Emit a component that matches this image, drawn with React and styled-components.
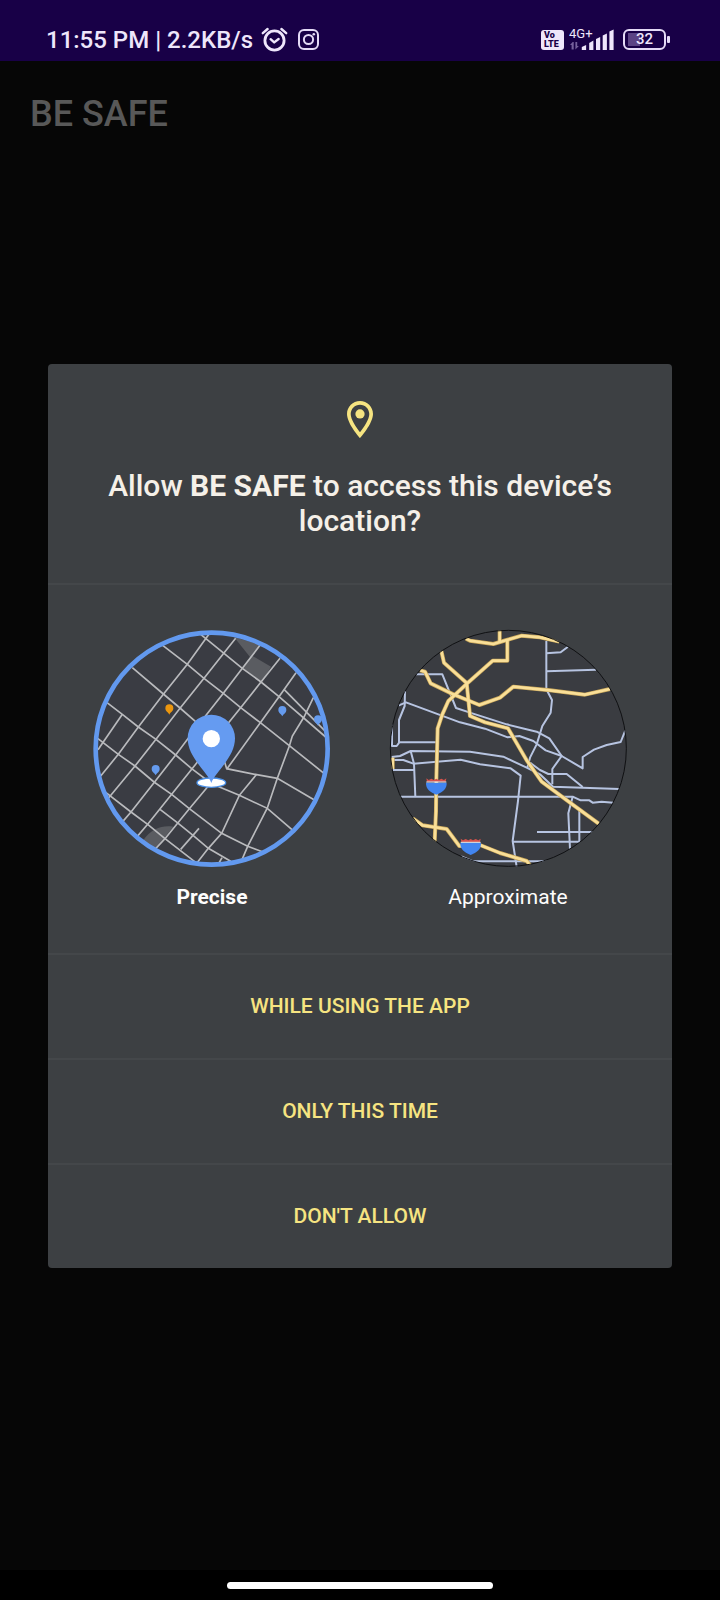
import React from "react";
import styled, { createGlobalStyle } from "styled-components";

const GlobalStyle = createGlobalStyle`
  *, *::before, *::after { box-sizing: border-box; }
  body {
    margin: 0;
    background: #060606;
    font-family: Roboto, "Liberation Sans", sans-serif;
  }
`;

const Screen = styled.div`
  min-height: 100vh;
  display: flex;
  flex-direction: column;
  background: #060606;
`;

const StatusBar = styled.header`
  height: 61px;
  padding: 18px 50px 0 46px;
  display: flex;
  align-items: center;
  justify-content: space-between;
  background: #180047;
  color: #eee6fb;
`;

const StatusGroup = styled.div`
  display: flex;
  align-items: center;
  gap: ${(p) => p.$gap}px;
`;

const Clock = styled.span`
  font-size: 24px;
  line-height: 28px;
  font-weight: 500;
  white-space: nowrap;
`;

const VolteBadge = styled.span`
  width: 23px;
  height: 20px;
  padding: 1px 3px;
  border-radius: 3px;
  background: #eee6fb;
  color: #180047;
  font-size: 9px;
  line-height: 9px;
  font-weight: 900;
`;

const Battery = styled.span`
  position: relative;
  width: 43px;
  height: 21px;
  margin-right: 4px;
  border: 2px solid #e4daf6;
  border-radius: 6px;
  display: grid;
  place-items: center;
  font-size: 15px;
  line-height: 17px;
  font-weight: 500;
  background: linear-gradient(#5b4384, #5b4384) 3px 2px / 12px 13px no-repeat;

  &::after {
    content: "";
    position: absolute;
    right: -6px;
    top: 5px;
    width: 3px;
    height: 7px;
    border-radius: 1px;
    background: #e4daf6;
  }
`;

const Stage = styled.main`
  flex: 1;
  display: grid;
  grid-template: 1fr / 1fr;
`;

const AppTitle = styled.h1`
  grid-area: 1 / 1;
  align-self: start;
  margin: 0;
  padding: 31px 30px;
  color: #585858;
  font-size: 36px;
  line-height: 44px;
  font-weight: 500;
`;

const Dialog = styled.section`
  grid-area: 1 / 1;
  align-self: center;
  margin: 0 48px;
  border-radius: 4px;
  overflow: hidden;
  background: #3d4043;
`;

const DialogHeader = styled.div`
  display: flex;
  flex-direction: column;
  align-items: center;
  gap: 30px;
  padding: 37px 48px 45px;
`;

const Question = styled.h2`
  margin: 0;
  color: #f5f0e8;
  font-size: 30px;
  line-height: 35px;
  font-weight: 500;
  text-align: center;

  strong { font-weight: 700; }
`;

const Accuracy = styled.div`
  display: flex;
  padding: 44px 16px 43px;
  border-top: 2px solid #44474a;
`;

const Choice = styled.label`
  flex: 1;
  display: flex;
  flex-direction: column;
  align-items: center;
  gap: 15px;
  cursor: pointer;
  color: #fdfdfd;
  font-size: 21px;
  line-height: 26px;
  font-weight: ${(p) => (p.$selected ? 700 : 400)};
`;

const HiddenRadio = styled.input`
  position: absolute;
  opacity: 0;
  pointer-events: none;
`;

const Action = styled.button`
  display: block;
  width: 100%;
  height: 105px;
  padding: 0;
  border: 0;
  border-top: 2px solid #44474a;
  background: transparent;
  color: #f6e481;
  font-family: inherit;
  font-size: 21px;
  line-height: 26px;
  font-weight: 500;
  cursor: pointer;
`;

const NavBar = styled.footer`
  height: 30px;
  display: flex;
  justify-content: center;
  align-items: center;
  background: #000;
`;

const HomeHandle = styled.span`
  width: 37%;
  height: 7px;
  border-radius: 4px;
  background: #fff;
`;

const AlarmIcon = () => (
  <svg width="27" height="25" viewBox="0 0 27 25" fill="none" stroke="#eee6fb" strokeLinecap="round" aria-hidden="true">
    <circle cx="13.5" cy="13.5" r="9.6" strokeWidth="2.8" />
    <path d="M1.8 6.2 6.6 2M25.2 6.2 20.4 2" strokeWidth="2.4" />
    <path d="M9.6 12.2 13.2 15.4 17.6 12" strokeWidth="2.4" strokeLinejoin="round" />
  </svg>
);

const InstagramIcon = () => (
  <svg width="21" height="21" viewBox="0 0 21 21" fill="none" stroke="#e4daf6" strokeWidth="2" aria-hidden="true">
    <rect x="1" y="1" width="19" height="19" rx="5" />
    <circle cx="10.5" cy="10.5" r="4.6" />
    <circle cx="15.8" cy="5.2" r="1.3" fill="#e4daf6" stroke="none" />
  </svg>
);

const SignalIcon = () => (
  <svg width="49" height="25" viewBox="0 0 49 25" fill="#eee6fb" aria-label="4G+ signal">
    <text x="0" y="11" fontSize="13" fontFamily="Roboto, sans-serif">4G+</text>
    <g fill="#75609c">
      <path d="M2.6 22.5V18H1l2.7-3h1v7.5z" />
      <path d="M6.400 15v7.500l3.500-3.500H8.200V15z" />
    </g>
    <path d="M12.800 23v-3l4.300-2v5z" />
    <path d="M20.200 23v-7l4.200-2.500V23z" />
    <path d="M27 23V12l4.200-2v13z" />
    <path d="M33.700 23V8.500L37.900 6.500V23z" />
    <path d="M40.400 23V4.500L44.600 2.500V23z" />
  </svg>
);

const PlaceIcon = () => (
  <svg width="26" height="37" viewBox="5 2 14 20" preserveAspectRatio="none" fill="#f6e481" aria-hidden="true">
    <path d="M12 2C8.130 2 5 5.130 5 9c0 5.250 7 13 7 13s7-7.750 7-13c0-3.870-3.130-7-7-7zM7 9c0-2.760 2.240-5 5-5s5 2.240 5 5c0 2.880-2.880 7.190-5 9.880C9.920 16.210 7 11.850 7 9z" />
    <circle cx="12" cy="9" r="2.500" />
  </svg>
);

const STREETS = [
  "M390 65 322 160 250 250 175 348 115 430 62 495",
  "M467 82 430 128 372 202 300 292 228 385 165 465 85 562",
  "M540 103 487 172 430 247 345 355 287 432 222 515 153 603 128 632",
  "M600 142 543 213 482 290 430 355 335 475 275 550 203 640 172 676",
  "M648 185 597 257 541 335 440 475",
  "M385 525 328 593 255 683 226 714",
  "M530 490 478 553 425 667 385 712 350 757",
  "M700 260 672 318 637 375 628 405 592 502 562 591 503 706 486 746",
  "M127 310 54 416",
  "M357 652 302 715",
  "M426 740 417 756",
  "M362 70 432 127 487 172 543 213 597 257 737 378",
  "M248 103 322 160 372 202 430 247 482 290 541 335 628 404 732 487",
  "M157 170 250 249 300 291 345 330 430 440 440 473 530 491 592 502 702 566",
  "M80 274 127 310 175 348 228 385 287 432 335 473 395 518 478 553 562 592 636 656",
  "M50 380 115 430 165 465 222 513 275 550 328 593 425 667 503 706 547 722",
  "M78 545 153 603 203 640 255 683 347 754",
  "M240 595 292 635 340 674 385 712 452 751",
  "M612 235 737 362",
];

const SmallPin = ({ x, y, color }) => (
  <path
    transform={`translate(${x} ${y})`}
    fill={color}
    d="M0 16C-3 9-12 6-12-3a12 12 0 0 1 24 0C12 6 3 9 0 16z"
  />
);

const PreciseMap = () => (
  <svg width="240" height="240" viewBox="36 54 720 720" aria-hidden="true">
    <clipPath id="precise-area"><circle cx="395" cy="413" r="350" /></clipPath>
    <g clipPath="url(#precise-area)">
      <rect x="36" y="54" width="720" height="720" fill="#3a3c43" />
      <path fill="#5a5c61" d="M462 78 542 102 516 134 573 167 546 212 488 171 510 138zM188 690C215 650 250 642 280 647L226 714z" />
      <g fill="none" stroke="#b9babd" strokeWidth="5">
        {STREETS.map((d) => <path key={d} d={d} />)}
      </g>
      <SmallPin x={268} y={295} color="#eb960e" />
      <SmallPin x={227} y={477} color="#659bee" />
      <SmallPin x={607} y={300} color="#659bee" />
      <SmallPin x={714} y={328} color="#659bee" />
    </g>
    <circle cx="395" cy="413" r="348" fill="none" stroke="#6299ef" strokeWidth="14" />
    <ellipse cx="394" cy="515" rx="43" ry="14" fill="#fff" stroke="#4a90e8" strokeWidth="4" />
    <path fill="#659bf1" d="M394 516C384 485 323 440 323 382a71 71 0 0 1 142 0C465 440 404 485 394 516z" />
    <circle cx="394" cy="383" r="26" fill="#fff" />
  </svg>
);

const ROADS = [
  "M138 190H217L258 291 300 305 410 340 500 362 538 382 575 435 547 474V520",
  "M85 284 108 274 270 334 345 353 413 379 448 375 490 390 527 418 575 435 638 472V438L672 416 710 402 752 393 766 358",
  "M105 240 104 285 87 327V394M66 340V405H80L88 394H202",
  "M65 438 90 435 122 420 300 422 400 437 470 470 510 490 549 527 748 534",
  "M65 447H100L130 458 272 446 330 460 422 472 452 494 444 570 428 690 440 768",
  "M66 477H131M122 420 132 458 136 557",
  "M90 557H608L632 568H658L668 575 695 572 730 575",
  "M529 90V235L546 267 542 305 517 345 500 400 480 440 472 470",
  "M529 127 572 124 594 107M529 181 678 176",
  "M480 455 510 477 535 489H590L638 528",
  "M608 557 595 607 600 714M628 596V692H428",
  "M501 663H668M274 736 310 751H530",
];

const HIGHWAYS = [
  "M288 83 300 89 370 99 410 87 455 74 510 79 568 92",
  "M389 56V93M412 86V149H368L292 217 235 270 217 310 203 352 199 505 198 600 194 692",
  "M214 120 222 155 290 216 300 315 345 334 414 352 470 448 515 512 600 575 686 638",
  "M150 178 165 182 182 217 250 250 328 282 390 260 430 227 540 238 645 251 720 234",
  "M128 622 158 643 230 654 268 705 300 704M330 702 390 726 470 750 480 762",
  "M68 440V474",
];

const Shield = ({ x, y }) => (
  <g transform={`translate(${x} ${y})`}>
    <path fill="#4285f0" d="M-31-8H31C32 12 18 20 0 28-18 20-32 12-31-8z" />
    <path fill="#d9534b" d="M-30-21-23-16-15-20-7-16 0-20 7-16 15-20 23-16 30-21 28-11H-28z" />
    <path stroke="#eef1f8" strokeWidth="3" d="M-30-10H30" />
  </g>
);

const ApproximateMap = () => (
  <svg width="240" height="240" viewBox="54 54 720 720" aria-hidden="true">
    <clipPath id="approximate-area"><circle cx="415" cy="412" r="355" /></clipPath>
    <g clipPath="url(#approximate-area)" fill="none" strokeLinejoin="round">
      <rect x="54" y="54" width="720" height="720" fill="#3a3c41" />
      <g stroke="#b7c4e1" strokeWidth="6">
        {ROADS.map((d) => <path key={d} d={d} />)}
      </g>
      <g stroke="#c9a75b" strokeWidth="12">
        {HIGHWAYS.map((d) => <path key={d} d={d} />)}
      </g>
      <g stroke="#f9df98" strokeWidth="8">
        {HIGHWAYS.map((d) => <path key={d} d={d} />)}
      </g>
      <Shield x={199} y={523} />
      <Shield x={302} y={704} />
    </g>
    <circle cx="415" cy="412" r="354" fill="none" stroke="#101113" strokeWidth="3" />
  </svg>
);

export default function App() {
  const [accuracy, setAccuracy] = React.useState("Precise");
  const choices = [
    ["Precise", PreciseMap],
    ["Approximate", ApproximateMap],
  ];

  return (
    <Screen>
      <GlobalStyle />
      <StatusBar>
        <StatusGroup $gap={10}>
          <StatusGroup $gap={8}>
            <Clock>11:55 PM | 2.2KB/s</Clock>
            <AlarmIcon />
          </StatusGroup>
          <InstagramIcon />
        </StatusGroup>
        <StatusGroup $gap={5}>
          <VolteBadge>Vo<br />LTE</VolteBadge>
          <SignalIcon />
          <Battery>32</Battery>
        </StatusGroup>
      </StatusBar>
      <Stage>
        <AppTitle>BE SAFE</AppTitle>
        <Dialog role="dialog" aria-labelledby="question">
          <DialogHeader>
            <PlaceIcon />
            <Question id="question">
              Allow <strong>BE SAFE</strong> to access this device’s location?
            </Question>
          </DialogHeader>
          <Accuracy role="radiogroup" aria-label="Location accuracy">
            {choices.map(([name, Map]) => (
              <Choice key={name} $selected={accuracy === name}>
                <HiddenRadio
                  type="radio"
                  name="accuracy"
                  checked={accuracy === name}
                  onChange={() => setAccuracy(name)}
                />
                <Map />
                {name}
              </Choice>
            ))}
          </Accuracy>
          <Action type="button">WHILE USING THE APP</Action>
          <Action type="button">ONLY THIS TIME</Action>
          <Action type="button">DON'T ALLOW</Action>
        </Dialog>
      </Stage>
      <NavBar>
        <HomeHandle />
      </NavBar>
    </Screen>
  );
}
